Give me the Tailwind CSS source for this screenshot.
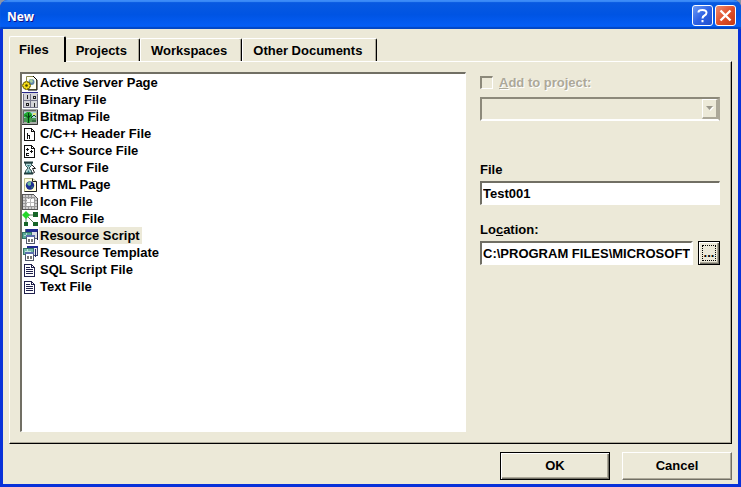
<!DOCTYPE html>
<html lang="en">
<head>
<meta charset="utf-8">
<meta name="viewport" content="width=device-width, initial-scale=1">
<title>New</title>
<script src="https://cdn.jsdelivr.net/npm/@tailwindcss/browser@4"></script>
</head>
<body class="bg-[#8a94a8] font-['Liberation_Sans',Arial,sans-serif] text-[13px] leading-[17px] font-bold text-black">
<main class="flex h-screen flex-col overflow-hidden rounded-t-lg bg-[#0831d9]">
  <header class="flex h-[29px] shrink-0 items-center justify-between bg-linear-to-b from-[#0a5be0] via-[#0054e3] to-[#0560fa] pr-[5px] pl-[7px] shadow-[inset_0_2px_1px_#3c8cf8,inset_0_-2px_1px_#0347c4]">
    <h1 class="pt-1 font-['Open_Sans',sans-serif] text-[12px] text-white [text-shadow:1px_1px_#0f1089]">New</h1>
    <div class="flex gap-[2px] pt-[2px]">
      <button type="button" aria-label="Help" class="flex size-[21px] items-center justify-center rounded-[3px] border border-white bg-linear-to-br from-[#6f9bf5] via-[#2f62e4] to-[#1f50cf]">
        <svg width="19" height="19" viewBox="0 0 19 19" fill="none" stroke="#fff" stroke-width="2"><path d="M5.500 6.500V6Q5.500 4 9.500 4t4 2.800Q13.500 8.500 11.500 9.500T9.500 12.500"/><path d="M9.500 14v2.200"/></svg>
      </button>
      <button type="button" aria-label="Close" class="flex size-[21px] items-center justify-center rounded-[3px] border border-white bg-linear-to-br from-[#ee8b6d] via-[#e0502b] to-[#c43a12]">
        <svg width="19" height="19" viewBox="0 0 19 19" stroke="#fff" stroke-width="2.400"><path d="M4.500 4.500l10 10M14.500 4.500l-10 10"/></svg>
      </button>
    </div>
  </header>

  <div class="mx-[3px] mb-[3px] flex min-h-0 grow flex-col bg-[#ece9d8] px-[6px] pt-[7px] pb-1">
    <nav role="tablist" class="flex items-end">
      <button type="button" role="tab" aria-selected="true" class="relative z-10 -mb-px h-[26px] rounded-t-[2px] border-t border-r-2 border-l border-t-white border-r-black border-l-white bg-[#ece9d8] pr-[15px] pl-[9px]">Files</button>
      <button type="button" role="tab" class="h-[23px] rounded-t-[2px] border-t border-r border-t-white border-r-black pr-3 pl-[10px] shadow-[inset_-1px_0_#aca899]">Projects</button>
      <button type="button" role="tab" class="h-[23px] rounded-t-[2px] border-t border-r border-l border-t-white border-r-black border-l-white pr-[14px] pl-[10px] shadow-[inset_-1px_0_#aca899]">Workspaces</button>
      <button type="button" role="tab" class="h-[23px] rounded-t-[2px] border-t border-r border-l border-t-white border-r-black border-l-white pr-[14px] pl-[10px] shadow-[inset_-1px_0_#aca899]">Other Documents</button>
    </nav>

    <section role="tabpanel" class="flex min-h-0 grow border-t border-r border-b border-l border-t-white border-r-black border-b-black border-l-white pt-[10px] pr-[11px] pb-[11px] pl-[10px] shadow-[inset_-1px_-1px_#aca899]">
      <ul role="listbox" aria-label="File types" class="min-w-0 grow border-t-2 border-r border-b border-l-2 border-t-[#716f64] border-r-white border-b-white border-l-[#716f64] bg-white">
        <li role="option" class="flex h-[17px] items-center gap-[2px]">
          <svg class="shrink-0" width="16" height="16" viewBox="0 0 16 16"><path d="M4.500 1.500h7l3 3v10h-10z" fill="#fffff0" stroke="#8a8a50"/><path d="M11 1l4 4v10H6" fill="none" stroke="#000"/><circle cx="9.500" cy="7" r="3" fill="#5f87a8"/><path d="M7 5l3-1 1 3-2 1z" fill="#a6cfa0"/><path d="M4.500 6v9M0 10.500h9M1.500 7.500l6 6M7.500 7.500l-6 6" stroke="#5b5200" stroke-width="2.600"/><path d="M4.500 6.500v8M.5 10.500h8M2 8l5 5M7 8l-5 5" stroke="#f2da18" stroke-width="1.500"/><circle cx="4.500" cy="10.500" r="2.900" fill="#f2da18"/><circle cx="4.500" cy="10.500" r="1.300" fill="#4b4600"/></svg>
          <span>Active Server Page</span></li>
        <li role="option" class="flex h-[17px] items-center gap-[2px]">
          <svg class="shrink-0" width="16" height="16" viewBox="0 0 16 16" shape-rendering="crispEdges"><path fill="#d4d4d8" d="M1 1h15v15H1z"/><path fill="#27278c" d="M0 0h16v1H0z"/><path d="M1.500 2v13.500h14V2M8.500 2v14M1 8.500h15" fill="none" stroke="#77778c"/><path d="M5 3h1v4H5zM12 11h1v4h-1z" fill="#222"/><path d="M11.500 4.500h2v2h-2zM4.500 11.500h2v2h-2z" fill="none" stroke="#222"/></svg>
          <span>Binary File</span></li>
        <li role="option" class="flex h-[17px] items-center gap-[2px]">
          <svg class="shrink-0" width="16" height="16" viewBox="0 0 16 16"><path fill="#a8aca8" d="M0 0h16v16H0z"/><path fill="#a9d8dc" d="M2 3h12v7H2z"/><path fill="#4b9555" d="M2 9h12v4H2z"/><path d="M5 3h3l2 2v3L8 9v5H5V9L2 8V5z" fill="#20a830"/><path d="M6.500 4v10M3.500 6l3 3 2-3" stroke="#083b12" fill="none"/><path d="M9 9l3-3 2 2M10 12h4" stroke="#143d20" fill="none"/><path d="M11 4h3v2h-3z" fill="#e8e87b"/><path d="M0 15.500h15.500V1" fill="none" stroke="#333"/><path d="M1.500 14V1.500H14" fill="none" stroke="#666"/></svg>
          <span>Bitmap File</span></li>
        <li role="option" class="flex h-[17px] items-center gap-[2px]">
          <svg class="shrink-0" width="16" height="16" viewBox="0 0 16 16" fill="none" stroke="#111" shape-rendering="crispEdges"><path fill="#fff" d="M2.500 2.500h7l3 3v9h-10z"/><path d="M9.500 2.500v3h3M5.500 7v6M5.500 9.500h2v3"/></svg>
          <span>C/C++ Header File</span></li>
        <li role="option" class="flex h-[17px] items-center gap-[2px]">
          <svg class="shrink-0" width="16" height="16" viewBox="0 0 16 16" fill="none" stroke="#111" shape-rendering="crispEdges"><path fill="#fff" d="M2.500 2.500h7l3 3v9h-10z"/><path d="M9.500 2.500v3h3M4 6.500h3M5.500 5v3M8 8.500h3M9.500 7v3M7 10.500H4.500v2H7"/></svg>
          <span>C++ Source File</span></li>
        <li role="option" class="flex h-[17px] items-center gap-[2px]">
          <svg class="shrink-0" width="16" height="16" viewBox="0 0 16 16" fill="none"><path d="M7.500 2.500l6 6h-3l2 4-2 1-2-4-2 2z" fill="#fff" stroke="#222"/><path d="M3.500 3v2.500L6 8l-2.500 3v2.500h6V11L7 8l2.500-2.500V3z" fill="#b2d8d8" stroke="#385858"/><path d="M2 2.500h9M2 13.500h9" stroke="#213e3e" stroke-width="2"/><path d="M5 5h3L6.500 7zM5 13l1.500-3L8 13z" fill="#357d80"/></svg>
          <span>Cursor File</span></li>
        <li role="option" class="flex h-[17px] items-center gap-[2px]">
          <svg class="shrink-0" width="16" height="16" viewBox="0 0 16 16"><path d="M2.500 1.500h8l4 3v10h-12z" fill="#ffffd8" stroke="#b9b98b"/><path d="M10.500 1.500v3h4v10h-12" fill="none" stroke="#202020"/><circle cx="8" cy="8.500" r="4.200" fill="#1d2f93"/><path d="M5 7q1-3 4-2.500L9 8 7 9z" fill="#6fba9b"/><path d="M9 10l2-1-1 3z" fill="#309060"/></svg>
          <span>HTML Page</span></li>
        <li role="option" class="flex h-[17px] items-center gap-[2px]">
          <svg class="shrink-0" width="16" height="16" viewBox="0 0 16 16" shape-rendering="crispEdges"><path fill="#d0d0d0" stroke="#555" d="M.5.500h11l4 4v11H.5z"/><path d="M3.500 1v14M6.500 1v14M9.500 1v14M12.500 3v12M1 3.500h12M1 6.500h14M1 9.500h14M1 12.500h14" stroke="#999"/><path fill="#fff" d="M5 5h7v7H5z"/><path d="M8.500 5v7M5 8.500h7" stroke="#bbb"/></svg>
          <span>Icon File</span></li>
        <li role="option" class="flex h-[17px] items-center gap-[2px]">
          <svg class="shrink-0" width="16" height="16" viewBox="0 0 16 16"><path d="M5 4h7M4 4v9M5 5l8 8" stroke="#5c7b5c"/><path d="M4 0l4 4-4 4-4-4z" fill="#25d72b"/><path d="M11 1h5v5h-5zM2 11h4v4H2zM11 11h5v4h-5z" fill="#176528"/></svg>
          <span>Macro File</span></li>
        <li role="option" aria-selected="true" class="flex h-[17px] items-center gap-[2px]">
          <svg class="shrink-0" width="16" height="16" viewBox="0 0 16 16" shape-rendering="crispEdges"><path d="M3.500 1.500h12v9h-12z" fill="#d9dde4" stroke="#53647b"/><path fill="#202a91" d="M4 1h12v3H4z"/><path d="M15.500 3v9" stroke="#202050"/><path d="M.5 4.500h9v6h-9z" fill="#58a999" stroke="#367567"/><path d="M2 7h5M4 5v5" stroke="#b5e3d5"/><path d="M4.500 7.500h8v8h-8z" fill="#fff" stroke="#52596d"/><path fill="#596cad" d="M4 7h9v2H4z"/><path d="M6 11h2v3H6zM9 11h2v3H9z" fill="#777"/></svg>
          <span class="-ml-px bg-[#ece9d8] pr-[2px] pl-px">Resource Script</span></li>
        <li role="option" class="flex h-[17px] items-center gap-[2px]">
          <svg class="shrink-0" width="16" height="16" viewBox="0 0 16 16" shape-rendering="crispEdges"><path d="M5.500 1.500h10v9h-10z" fill="#e6e8ed" stroke="#344069"/><path fill="#202a91" d="M5 1h11v2H5z"/><path d="M1.500 3.500h10v6h-10z" fill="#75b8a9" stroke="#367567"/><path d="M13.500 4v8M3 6h6M5 4v5" stroke="#c3e9dd"/><path d="M13.500 4v8" stroke="#202a70"/><path d="M3.500 7.500h8v8h-8z" fill="#fff" stroke="#52596d"/><path fill="#596cad" d="M3 7h9v2H3z"/><path d="M5 11h2v3H5zM8 11h2v3H8z" fill="#777"/></svg>
          <span>Resource Template</span></li>
        <li role="option" class="flex h-[17px] items-center gap-[2px]">
          <svg class="shrink-0" width="16" height="16" viewBox="0 0 16 16" fill="none" stroke="#20204c" shape-rendering="crispEdges"><path fill="#fff" d="M2.500 2.500h7l3 3v9h-10z"/><path d="M9.500 2.500v3h3M4 5.500h4M4 7.500h7M4 9.500h7M4 11.500h7"/></svg>
          <span>SQL Script File</span></li>
        <li role="option" class="flex h-[17px] items-center gap-[2px]">
          <svg class="shrink-0" width="16" height="16" viewBox="0 0 16 16" fill="none" stroke="#20204c" shape-rendering="crispEdges"><path fill="#fff" d="M2.500 2.500h7l3 3v9h-10z"/><path d="M9.500 2.500v3h3M4 5.500h4M4 7.500h7M4 9.500h7M4 11.500h7"/></svg>
          <span>Text File</span></li>
      </ul>

      <form class="ml-[14px] flex w-[240px] shrink-0 flex-col pt-px">
        <div class="flex h-[18px] items-center gap-[6px] text-[#aca899] [text-shadow:1px_1px_#fff]">
          <input id="add" type="checkbox" disabled class="size-[13px] appearance-none border-t-2 border-r border-b border-l-2 border-t-[#8c897a] border-r-white border-b-white border-l-[#8c897a]">
          <label for="add"><u>A</u>dd to project:</label>
        </div>
        <div class="relative mt-[6px]">
          <select aria-label="Project" disabled class="block h-6 w-full appearance-none border-t-2 border-r-2 border-b-2 border-l-2 border-t-[#8c897a] border-r-[#aca899] border-b-white border-l-[#8c897a] bg-[#ece9d8]"><option></option></select>
          <span class="pointer-events-none absolute top-[2px] right-[2px] flex h-5 w-4 items-center justify-center border-t border-r-2 border-b-2 border-l border-t-white border-r-[#aca899] border-b-[#aca899] border-l-white">
            <svg width="9" height="5" viewBox="0 0 9 5"><path d="M2 1h7L5.500 5z" fill="#fff"/><path d="M1 0h7L4.500 4z" fill="#99968a"/></svg>
          </span>
        </div>
        <label for="file" class="mt-10">File</label>
        <input id="file" type="text" value="Test001" class="mt-[3px] h-6 w-full border-t-2 border-r border-b border-l-2 border-t-[#716f64] border-r-white border-b-white border-l-[#716f64] bg-white px-px pb-px outline-none">
        <label for="location" class="mt-4">Lo<u>c</u>ation:</label>
        <div class="mt-[3px] flex items-center justify-between gap-[5px]">
          <div class="min-w-0 grow border-t-2 border-r-2 border-b border-l-2 border-t-[#716f64] border-r-white border-b-white border-l-[#716f64] bg-white">
            <input id="location" type="text" value="C:\PROGRAM FILES\MICROSOFT VISUAL STUDIO" class="block h-[21px] w-full px-px pb-px outline-none">
          </div>
          <button type="button" aria-label="Browse" class="h-6 w-[22px] border border-black p-[3px] shadow-[inset_1px_1px_#fff,inset_-1px_-1px_#716f64,inset_-2px_-2px_#aca899]"><span class="block h-4 w-[14px] border border-dotted border-black leading-[14px]">...</span></button>
        </div>
      </form>
    </section>

    <footer class="mt-2 flex shrink-0 justify-end gap-3">
      <button type="submit" class="h-7 w-[110px] border border-black pb-px shadow-[inset_1px_1px_#fff,inset_-1px_-1px_#716f64,inset_-2px_-2px_#aca899]">OK</button>
      <button type="button" class="h-7 w-[110px] border-t border-r border-b border-l border-t-white border-r-[#716f64] border-b-[#716f64] border-l-white pb-px shadow-[inset_-1px_-1px_#aca899]">Cancel</button>
    </footer>
  </div>
</main>
</body>
</html>
